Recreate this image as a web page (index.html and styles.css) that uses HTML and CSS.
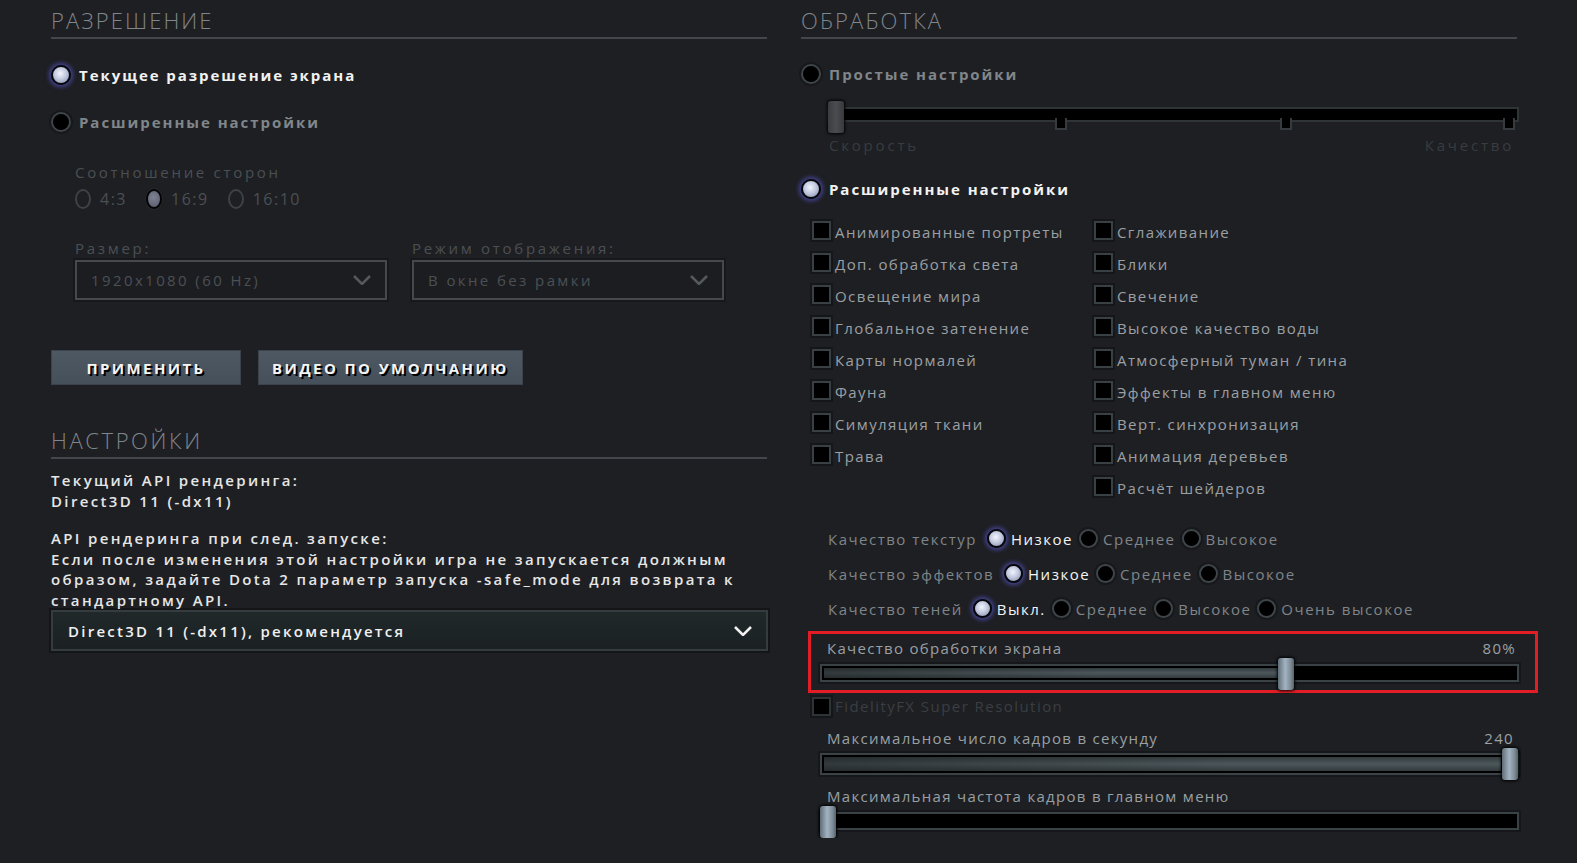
FILE: index.html
```html
<!DOCTYPE html>
<html lang="ru">
<head>
  <meta charset="UTF-8">
  <title>Настройки видео</title>
  <link rel="stylesheet" href="styles.css">
</head>
<body>
  <div class="page">
    <!-- Left column -->
    <section class="col">
      <h2 class="section-title">Разрешение</h2>
      <div class="radio-row big first"><span class="radio on"></span>Текущее разрешение экрана</div>
      <div class="radio-row big muted"><span class="radio"></span>Расширенные настройки</div>

      <div class="advanced">
        <div class="field-label aspect-label">Соотношение сторон</div>
        <div class="aspect">
          <span class="opt"><span class="oval"></span>4:3</span>
          <span class="opt"><span class="oval on-dim"></span>16:9</span>
          <span class="opt"><span class="oval"></span>16:10</span>
        </div>
        <div class="selects">
          <div class="field">
            <div class="field-label">Размер:</div>
            <div class="select dim">1920x1080 (60 Hz)
              <svg class="chevron" viewBox="0 0 18 10"><polyline points="1,1 9,9 17,1"/></svg>
            </div>
          </div>
          <div class="field">
            <div class="field-label">Режим отображения:</div>
            <div class="select dim">В окне без рамки
              <svg class="chevron" viewBox="0 0 18 10"><polyline points="1,1 9,9 17,1"/></svg>
            </div>
          </div>
        </div>
      </div>

      <div class="buttons">
        <button class="btn apply">Применить</button>
        <button class="btn">Видео по умолчанию</button>
      </div>

      <h2 class="section-title second">Настройки</h2>
      <p class="api-text first">Текущий API рендеринга:<br>Direct3D 11 (-dx11)</p>
      <p class="api-text">API рендеринга при след. запуске:<br>Если после изменения этой настройки игра не запускается должным образом, задайте Dota 2 параметр запуска -safe_mode для возврата к стандартному API.</p>
      <div class="select api">Direct3D 11 (-dx11), рекомендуется
        <svg class="chevron" viewBox="0 0 18 10"><polyline points="1,1 9,9 17,1"/></svg>
      </div>
    </section>

    <!-- Right column -->
    <section class="col">
      <h2 class="section-title">Обработка</h2>
      <div class="radio-row big muted first-right"><span class="radio"></span>Простые настройки</div>

      <div class="preset">
        <div class="preset-track">
          <span class="tick" style="left: 226px"></span>
          <span class="tick" style="left: 451px"></span>
          <span class="tick" style="left: 674px"></span>
        </div>
        <span class="thumb dark"></span>
      </div>
      <div class="preset-labels"><span>Скорость</span><span>Качество</span></div>

      <div class="radio-row big adv"><span class="radio on"></span>Расширенные настройки</div>

      <div class="checks">
        <div class="check"><span class="box"></span>Анимированные портреты</div>
        <div class="check"><span class="box"></span>Сглаживание</div>
        <div class="check"><span class="box"></span>Доп. обработка света</div>
        <div class="check"><span class="box"></span>Блики</div>
        <div class="check"><span class="box"></span>Освещение мира</div>
        <div class="check"><span class="box"></span>Свечение</div>
        <div class="check"><span class="box"></span>Глобальное затенение</div>
        <div class="check"><span class="box"></span>Высокое качество воды</div>
        <div class="check"><span class="box"></span>Карты нормалей</div>
        <div class="check"><span class="box"></span>Атмосферный туман / тина</div>
        <div class="check"><span class="box"></span>Фауна</div>
        <div class="check"><span class="box"></span>Эффекты в главном меню</div>
        <div class="check"><span class="box"></span>Симуляция ткани</div>
        <div class="check"><span class="box"></span>Верт. синхронизация</div>
        <div class="check"><span class="box"></span>Трава</div>
        <div class="check"><span class="box"></span>Анимация деревьев</div>
        <div class="check empty"></div>
        <div class="check"><span class="box"></span>Расчёт шейдеров</div>
      </div>

      <div class="quality">
        <div class="q-row">Качество текстур
          <span class="q-opt sel"><span class="radio small on"></span>Низкое</span>
          <span class="q-opt"><span class="radio small"></span>Среднее</span>
          <span class="q-opt"><span class="radio small"></span>Высокое</span>
        </div>
        <div class="q-row">Качество эффектов
          <span class="q-opt sel"><span class="radio small on"></span>Низкое</span>
          <span class="q-opt"><span class="radio small"></span>Среднее</span>
          <span class="q-opt"><span class="radio small"></span>Высокое</span>
        </div>
        <div class="q-row">Качество теней
          <span class="q-opt sel"><span class="radio small on"></span>Выкл.</span>
          <span class="q-opt"><span class="radio small"></span>Среднее</span>
          <span class="q-opt"><span class="radio small"></span>Высокое</span>
          <span class="q-opt"><span class="radio small"></span>Очень высокое</span>
        </div>
      </div>

      <div class="highlight">
        <div class="slider-label"><span>Качество обработки экрана</span><span>80%</span></div>
        <div class="slider">
          <div class="track"><div class="fill" style="width: 66.5%"></div></div>
          <span class="thumb" style="left: 458px"></span>
        </div>
      </div>

      <div class="check disabled fsr"><span class="box"></span>FidelityFX Super Resolution</div>

      <div class="slider-block fps">
        <div class="slider-label"><span>Максимальное число кадров в секунду</span><span class="val">240</span></div>
        <div class="slider">
          <div class="track"><div class="fill" style="width: 98%"></div></div>
          <span class="thumb" style="left: 682px"></span>
        </div>
      </div>

      <div class="slider-block menu">
        <div class="slider-label"><span>Максимальная частота кадров в главном меню</span></div>
        <div class="slider">
          <div class="track"></div>
          <span class="thumb" style="left: 0px"></span>
        </div>
      </div>
    </section>
  </div>
</body>
</html>
```

FILE: styles.css
```css
body {
  margin: 0;
  background-color: #1e1f23;
  font-family: "Open Sans", "Noto Sans", sans-serif;
  color: #9ba0a4;
  overflow: hidden;
}

.page {
  display: flex;
  gap: 34px;
  padding-left: 51px;
}

.col {
  width: 716px;
  flex-shrink: 0;
}

.section-title {
  margin: 0;
  padding: 5px 0 2px;
  font-size: 22px;
  line-height: 30px;
  font-weight: 300;
  letter-spacing: 2.1px;
  text-transform: uppercase;
  color: #80868b;
  border-bottom: 2px solid #43474b;
}

.section-title.second {
  margin-top: 35px;
  letter-spacing: 2.6px;
}

/* radios */
.radio {
  display: inline-block;
  flex-shrink: 0;
  width: 16px;
  height: 16px;
  border-radius: 50%;
  background: #000;
  border: 2px solid #3e4548;
  box-shadow: 0 0 0 2px #16181b;
}

.radio.on {
  background: radial-gradient(circle at 45% 40%, #f2f4ff 0%, #c3c9de 45%, #7d86a6 100%);
  border-color: #07070d;
  box-shadow: 0 0 4px 2px rgba(88, 88, 205, 0.65);
}

.radio.small {
  width: 15px;
  height: 15px;
}

.radio-row {
  display: flex;
  align-items: center;
  gap: 8px;
  height: 24px;
}

.radio-row.big {
  font-size: 15px;
  font-weight: 700;
  letter-spacing: 1.95px;
  color: #f2f2f2;
}

.radio-row.muted {
  color: #80868a;
  margin-top: 23px;
}

.radio-row.first {
  margin-top: 24px;
}

.radio-row.first-right {
  margin-top: 23px;
}

.radio-row.adv {
  margin-top: 22px;
}

/* disabled resolution block */
.advanced {
  padding-left: 24px;
}

.field-label {
  height: 20px;
  line-height: 20px;
  font-size: 15px;
  letter-spacing: 2.7px;
  color: #4a4f54;
}

.aspect-label {
  margin-top: 28px;
}

.aspect {
  display: flex;
  gap: 19px;
  height: 22px;
  margin-top: 6px;
  font-size: 16px;
  letter-spacing: 1.5px;
  color: #4a4f54;
}

.aspect .opt {
  display: flex;
  align-items: center;
  gap: 9px;
}

.oval {
  display: inline-block;
  width: 12px;
  height: 16px;
  border-radius: 50%;
  border: 2px solid #3d4245;
}

.oval.on-dim {
  background: radial-gradient(circle at 45% 40%, #7e8292 0%, #55596a 100%);
  border-color: #050507;
  box-shadow: 0 0 0 1px #26272b;
}

.selects {
  display: flex;
  gap: 25px;
  margin-top: 28px;
}

.field {
  width: 312px;
}

.select {
  display: flex;
  align-items: center;
  justify-content: space-between;
  box-sizing: border-box;
  margin-top: 2px;
  height: 40px;
  padding: 0 14px 0 14px;
  font-size: 15px;
  letter-spacing: 2.4px;
}

.select.dim {
  border: 2px solid #45494b;
  box-shadow: 0 0 0 2px #17181b;
  background: #1c1d20;
  color: #4b5055;
}

.chevron {
  width: 18px;
  height: 10px;
  fill: none;
  stroke: currentColor;
  stroke-width: 2.5;
}

.select.dim .chevron {
  stroke: #54595c;
}

.buttons {
  display: flex;
  gap: 17px;
  margin-top: 50px;
}

.btn {
  height: 35px;
  padding: 0 13px;
  border: 1px solid #3b444c;
  background: linear-gradient(#4e5862, #45505a);
  color: #f4f4f4;
  font-family: "Open Sans", "Noto Sans", sans-serif;
  font-size: 15px;
  font-weight: 700;
  letter-spacing: 2.4px;
  text-transform: uppercase;
  text-shadow: 2px 2px 0 #000;
}

.btn.apply {
  width: 190px;
}

.api-text {
  margin: 17px 0 0;
  font-size: 15px;
  line-height: 20.5px;
  font-weight: 600;
  letter-spacing: 2.35px;
  color: #e6e6e6;
}

.api-text.first {
  margin-top: 11px;
}

.select.api {
  margin-top: 0;
  height: 41px;
  padding: 0 14px 0 15px;
  border: 2px solid #353c3f;
  box-shadow: 0 0 0 2px #141517;
  background: linear-gradient(#20282a, #1b2123);
  color: #f0f0f0;
  font-weight: 600;
  letter-spacing: 2.25px;
  width: 717px;
}

/* preset slider */
.preset {
  position: relative;
  height: 32px;
  margin: 15px 0 0 26px;
}

.preset-track {
  position: absolute;
  left: 0;
  right: -2px;
  top: 6px;
  height: 15px;
  background: #000;
  border: 2px solid #2f3437;
  box-sizing: border-box;
}

.tick {
  position: absolute;
  top: 9px;
  width: 8px;
  height: 10px;
  border: 2px solid #353b3e;
  border-top: none;
  background: #000;
}

.thumb {
  position: absolute;
  top: 0;
  width: 16px;
  height: 32px;
  box-sizing: border-box;
  border-radius: 3px;
  background: linear-gradient(90deg, #5f6d78, #a4b3c1 45%, #7c8a96 80%, #56636d);
  box-shadow: 0 0 3px 1px #000;
}

.thumb.dark {
  left: 1px;
  background: linear-gradient(90deg, #3a3c3f, #4a4c50 50%, #38393c);
}

.preset-labels {
  display: flex;
  justify-content: space-between;
  margin: 2px 3px 0 28px;
  height: 20px;
  line-height: 20px;
  font-size: 15px;
  letter-spacing: 2.8px;
  color: #383c40;
}

/* checkboxes */
.checks {
  display: grid;
  grid-template-columns: 282px auto;
  grid-auto-rows: 32px;
  margin-top: 15px;
  padding-left: 11px;
}

.check {
  display: flex;
  align-items: center;
  gap: 4px;
  font-size: 15px;
  letter-spacing: 1.4px;
  color: #9ba0a4;
}

.box {
  flex-shrink: 0;
  width: 19px;
  height: 19px;
  box-sizing: border-box;
  background: #000;
  border: 2px solid #394043;
  box-shadow: 0 0 0 2px #141619;
  margin-top: -3px;
}

/* quality radios */
.quality {
  margin-top: 17px;
  padding-left: 27px;
}

.q-row {
  display: flex;
  align-items: center;
  gap: 6px;
  height: 35px;
  font-size: 15px;
  letter-spacing: 1.5px;
  color: #7f8589;
}

.q-opt {
  display: flex;
  align-items: center;
  gap: 5px;
}

.q-row .q-opt:first-of-type {
  margin-left: 4px;
}

.q-opt.sel {
  color: #f4f4f4;
}

/* sliders */
.highlight {
  box-sizing: border-box;
  width: 730px;
  height: 62px;
  margin: 5px 0 0 7px;
  padding: 4px 16px 0 9px;
  border: 3px solid #e31d25;
}

.slider-label {
  display: flex;
  justify-content: space-between;
  height: 20px;
  line-height: 20px;
  padding: 0 3px 0 7px;
  font-size: 15px;
  letter-spacing: 1.3px;
  color: #9aa0a4;
}

.slider {
  position: relative;
  height: 32px;
}

.track {
  position: absolute;
  left: 0;
  right: 0;
  top: 6px;
  height: 18px;
  box-sizing: border-box;
  background: #000;
  border: 2px solid #3a4245;
  box-shadow: 0 0 0 2px #15171a;
  padding: 2px;
}

.fill {
  height: 100%;
  background: linear-gradient(90deg, rgba(30, 34, 36, 0.5), rgba(30, 34, 36, 0) 60%),
    linear-gradient(#3b4548, #5b676c 50%, #3b4548);
  opacity: 0.85;
}

.fsr {
  height: 24px;
  margin: 1px 0 0 11px;
  color: #3a3e42;
  letter-spacing: 1.45px;
}

.fsr .box {
  margin-top: 0;
  border-color: #2e3335;
}

.slider-block {
  width: 699px;
  margin-left: 19px;
}

.slider-block.fps {
  margin-top: 10px;
}

.slider-block.fps .slider-label {
  padding-right: 5px;
}

.slider-block.fps .track {
  top: 5px;
  height: 22px;
}

.slider-block.menu {
  margin-top: 6px;
}
```
